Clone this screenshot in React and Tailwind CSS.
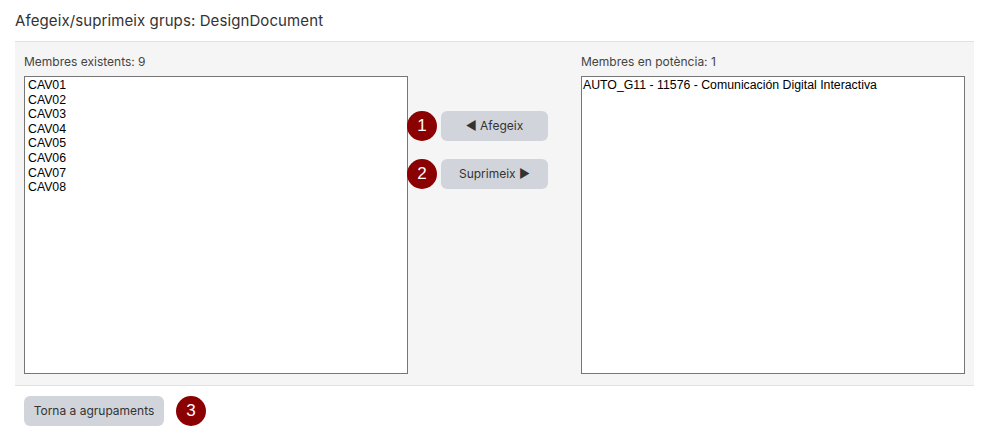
import React from 'react'

const existents = ['CAV01', 'CAV02', 'CAV03', 'CAV04', 'CAV05', 'CAV06', 'CAV07', 'CAV08']

function Badge({ n }) {
    return (
        <span className='flex items-center justify-center w-[30px] h-[30px] rounded-full bg-[#8b0000] text-white text-[17px] font-["Liberation_Sans",sans-serif] shrink-0'>
            {n}
        </span>
    )
}

export default function App() {
    return (
        <div className='w-full h-[435px] bg-white px-[15px] font-["Inter",sans-serif] text-[#333]'>
            <h1 className='h-[41px] pt-[10px] text-[15px] text-[#333] tracking-[0.1px]'>Afegeix/suprimeix grups: DesignDocument</h1>

            <section className='h-[345px] bg-[#f5f5f5] border-t border-b border-[#e2e2e2] px-[9px] pt-[11px] flex'>
                {/* existents */}
                <div className='w-[384px] shrink-0'>
                    <p className='text-[12px] text-[#444] h-[23px]'>Membres existents: 9</p>
                    <div className='h-[298px] bg-white border border-[#767676] px-[3px] pt-[1px] font-["Liberation_Sans",sans-serif] text-[12.3px] leading-[14.6px] text-black'>
                        {existents.map(c => <div key={c}>{c}</div>)}
                    </div>
                </div>

                {/* botons */}
                <div className='w-[173px] shrink-0 pt-[58px] flex flex-col gap-[18px]'>
                    <div className='flex items-center gap-[4px] -ml-[1px]'>
                        <Badge n='1' />
                        <button className='w-[107px] h-[30px] rounded-[6px] bg-[#d1d5db] text-[12px] text-[#333]'>◀ Afegeix</button>
                    </div>
                    <div className='flex items-center gap-[4px] -ml-[1px]'>
                        <Badge n='2' />
                        <button className='w-[107px] h-[30px] rounded-[6px] bg-[#d1d5db] text-[12px] text-[#333]'>Suprimeix ▶</button>
                    </div>
                </div>

                {/* en potència */}
                <div className='w-[384px] shrink-0'>
                    <p className='text-[12px] text-[#444] h-[23px]'>Membres en potència: 1</p>
                    <div className='h-[298px] bg-white border border-[#767676] px-[1px] pt-[1px] font-["Liberation_Sans",sans-serif] text-[12.3px] leading-[14.6px] text-black'>
                        <div>AUTO_G11 - 11576 - Comunicación Digital Interactiva</div>
                    </div>
                </div>
            </section>

            <div className='flex items-center gap-[12px] pt-[10px] pl-[9px]'>
                <button className='w-[140px] h-[30px] rounded-[6px] bg-[#d1d5db] text-[12px] text-[#333]'>Torna a agrupaments</button>
                <Badge n='3' />
            </div>
        </div>
    )
}
